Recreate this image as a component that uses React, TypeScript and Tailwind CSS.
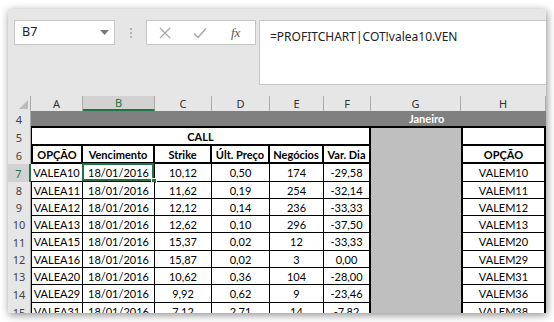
import React from "react";

const grid = "grid grid-cols-[23px_52px_72px_57px_58px_54px_47px_90px_85px] grid-rows-[100%]";
const cellFont = "font-['Lato','Liberation_Sans',sans-serif] text-[11px] leading-[13px] text-black";
const uiFont = "font-['Noto_Sans','Liberation_Sans',sans-serif]";

const rows = [
  { n: 7, h: "h-[18px]", a: "VALEA10", c: "10,12", d: "0,50", e: "174", f: "-29,58", hh: "VALEM10" },
  { n: 8, h: "h-[17px]", a: "VALEA11", c: "11,62", d: "0,19", e: "254", f: "-32,14", hh: "VALEM11" },
  { n: 9, h: "h-[17px]", a: "VALEA12", c: "12,12", d: "0,14", e: "236", f: "-33,33", hh: "VALEM12" },
  { n: 10, h: "h-[17px]", a: "VALEA13", c: "12,62", d: "0,10", e: "296", f: "-37,50", hh: "VALEM13" },
  { n: 11, h: "h-[18px]", a: "VALEA15", c: "15,37", d: "0,02", e: "12", f: "-33,33", hh: "VALEM20" },
  { n: 12, h: "h-[17px]", a: "VALEA16", c: "15,87", d: "0,02", e: "3", f: "0,00", hh: "VALEM29" },
  { n: 13, h: "h-[17px]", a: "VALEA20", c: "10,62", d: "0,36", e: "104", f: "-28,00", hh: "VALEM31" },
  { n: 14, h: "h-[18px]", a: "VALEA29", c: "9,92", d: "0,62", e: "9", f: "-23,46", hh: "VALEM36" },
  { n: 15, h: "h-[18px]", a: "VALEA31", c: "7,12", d: "2,71", e: "14", f: "-7,82", hh: "VALEM38" },
];

const colHeads = ["A", "B", "C", "D", "E", "F", "G", "H"];

function RowHead({ n, active }: { n: number; active?: boolean }) {
  return (
    <div
      className={`flex items-center justify-center ${uiFont} text-[11px] leading-[13px] ${
        active
          ? "bg-[#d2d2d2] text-[#217346] border-r-2 border-[#217346]"
          : "bg-[#e6e6e6] text-[#444] border-r border-[#ababab]"
      }`}
    >
      {n}
    </div>
  );
}

export default function App() {
  return (
    <div className="w-[554px] h-[322px] bg-white pl-[8px] pt-[9px] overflow-hidden">
      <div className="w-[538px] h-[304px] bg-[#e6e6e6] overflow-hidden flex flex-col shadow-[1px_2px_8px_rgba(0,0,0,0.45)]">
        {/* formula bar */}
        <div className="h-[87px] shrink-0 flex items-start pt-[11px] pl-[6px]">
          <div className="w-[101px] h-[25px] bg-white border border-[#c6c6c6] flex items-center justify-between pl-[7px] pr-[5px]">
            <span className={`${uiFont} text-[12.5px] text-[#222]`}>B7</span>
            <svg width="9" height="5" viewBox="0 0 9 5">
              <path d="M0 0 L9 0 L4.5 5 Z" fill="#7a7a7a" />
            </svg>
          </div>
          <div className="w-[31px] h-[25px] flex flex-col items-center justify-center gap-[2px]">
            <div className="w-[2px] h-[2px] bg-[#b4b4b4]" />
            <div className="w-[2px] h-[2px] bg-[#b4b4b4]" />
            <div className="w-[2px] h-[2px] bg-[#b4b4b4]" />
          </div>
          <div className="w-[110px] h-[25px] bg-white border border-[#c6c6c6] flex items-center pl-[12px] gap-[22px]">
            <svg width="12" height="12" viewBox="0 0 12 12">
              <path d="M1 1 L11 11 M11 1 L1 11" stroke="#a6a6a6" strokeWidth="1.2" />
            </svg>
            <svg width="14" height="12" viewBox="0 0 14 12">
              <path d="M1 6.5 L5 10.5 L13 1.5" stroke="#a6a6a6" strokeWidth="1.5" fill="none" />
            </svg>
            <span className="font-['Liberation_Serif',serif] italic text-[13px] text-[#555] ml-[2px]">
              fx
            </span>
          </div>
          <div className="ml-[3px] flex-1 h-[65px] bg-white border-y border-l border-[#c6c6c6] pl-[10px] pt-[2px]">
            <span className={`${uiFont} text-[12px] text-[#222]`}>=PROFITCHART|COT!valea10.VEN</span>
          </div>
        </div>

        {/* column headers */}
        <div className={`${grid} h-[15px] shrink-0`}>
          <div className="bg-[#e6e6e6] border-r border-[#ababab] flex items-end justify-end pr-[2px] pb-[2px]">
            <svg width="9" height="9" viewBox="0 0 9 9">
              <path d="M9 0 L9 9 L0 9 Z" fill="#bcbcbc" />
            </svg>
          </div>
          {colHeads.map((c) => (
            <div
              key={c}
              className={`flex items-center justify-center ${uiFont} text-[11px] leading-[13px] border-r border-[#ababab] ${
                c === "B"
                  ? "bg-[#d2d2d2] text-[#217346] border-b-2 border-b-[#217346]"
                  : "bg-[#e6e6e6] text-[#333]"
              }`}
            >
              {c}
            </div>
          ))}
        </div>

        {/* row 4 */}
        <div className={`${grid} h-[17px] shrink-0`}>
          <RowHead n={4} />
          <div className="col-span-8 bg-[#808080] border-b-2 border-black pl-[378px] flex items-center">
            <span className={`${cellFont} font-bold text-white`}>Janeiro</span>
          </div>
        </div>

        {/* row 5 */}
        <div className={`${grid} h-[18px] shrink-0`}>
          <RowHead n={5} />
          <div className={`col-span-6 bg-white border-l border-r-2 border-b-2 border-black flex items-center justify-center ${cellFont} font-bold`}>
            CALL
          </div>
          <div className="bg-[#bfbfbf]" />
          <div className="bg-white border-l-2 border-r-2 border-b-2 border-black" />
        </div>

        {/* row 6 */}
        <div className={`${grid} h-[18px] shrink-0`}>
          <RowHead n={6} />
          {["OPÇÃO", "Vencimento", "Strike", "Últ. Preço", "Negócios", "Var. Dia"].map((t, i) => (
            <div
              key={t}
              className={`bg-white border-r-2 border-b-2 border-black flex items-center justify-center whitespace-nowrap ${cellFont} font-bold ${
                i === 0 ? "border-l-2" : ""
              }`}
            >
              {t}
            </div>
          ))}
          <div className="bg-[#bfbfbf]" />
          <div className={`bg-white border-l-2 border-r-2 border-b-2 border-black flex items-center justify-center ${cellFont} font-bold`}>
            OPÇÃO
          </div>
        </div>

        {/* data rows */}
        {rows.map((r) => {
          const cell = `bg-white border-r border-b border-black flex items-center justify-center whitespace-nowrap ${cellFont}`;
          return (
            <div key={r.n} className={`${grid} ${r.h} shrink-0`}>
              <RowHead n={r.n} active={r.n === 7} />
              <div className={`${cell} ${r.n === 7 ? "" : "border-l"}`}>{r.a}</div>
              <div className={`${cell} relative`}>
                18/01/2016
                {r.n === 7 && (
                  <>
                    <div className="absolute -left-[1px] -top-[1px] right-0 bottom-0 border-2 border-[#217346]" />
                    <div className="absolute -right-[3px] -bottom-[3px] w-[6px] h-[6px] bg-[#217346] border border-white" />
                  </>
                )}
              </div>
              <div className={cell}>{r.c}</div>
              <div className={cell}>{r.d}</div>
              <div className={cell}>{r.e}</div>
              <div className={`${cell} border-r-2`}>{r.f}</div>
              <div className="bg-[#bfbfbf]" />
              <div className={`${cell} border-l-2 border-r-2`}>{r.hh}</div>
            </div>
          );
        })}
      </div>
    </div>
  );
}
